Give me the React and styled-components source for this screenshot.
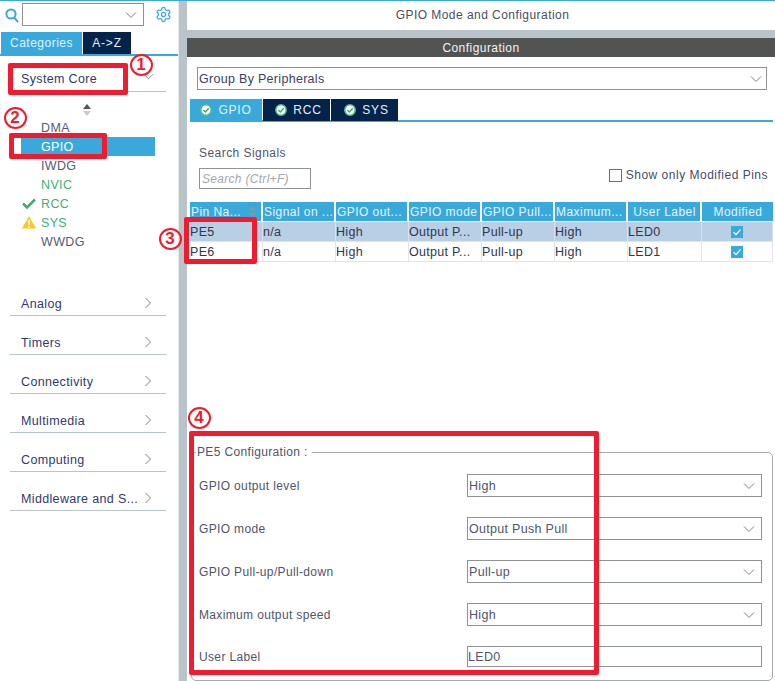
import React from "react";
import styled, { createGlobalStyle } from "styled-components";
import { Settings } from "lucide-react";

const Global = createGlobalStyle`
  html, body { margin: 0; padding: 0; background: #fff; }
  body { font-family: "Liberation Sans", Arial, sans-serif; font-size: 12px; color: #3c4060; letter-spacing: .45px; }
  * { box-sizing: border-box; }
`;

const BLUE = "#39a9dc";
const NAVY = "#03234b";
const RED = "#ee1c2e";
const GREY = "#8f9296";
const LINE = "#b9c4ca";

const Page = styled.div`
  position: relative; width: 775px; height: 681px; overflow: hidden;
  display: flex; border-top: 1px solid ${BLUE};
`;
const Side = styled.aside`width: 178px; flex: none; display: flex; flex-direction: column;`;
const Splitter = styled.div`width: 9px; flex: none; margin-top: -1px; background: ${LINE}; border-left: 1px solid #e6eaec;`;
const Main = styled.main`flex: 1; min-width: 0; display: flex; flex-direction: column;`;

const SearchRow = styled.div`height: 27px; padding: 2px 0 0 5px; display: flex; align-items: flex-start; gap: 3px;`;
const SearchGlyph = styled.svg`width: 14px; height: 15px; margin-top: 5px; flex: none;`;
const Combo = styled.div`
  width: ${p => p.$w || "100%"}; height: ${p => p.$h || 23}px; flex: none; border: 1px solid ${GREY};
  background: #fff; display: flex; align-items: center; padding: 0 ${p => p.$pr ?? 6}px 0 1px; justify-content: space-between; font-size: 12.5px; letter-spacing: .3px;
`;
const GearWrap = styled.div`width: 17px; height: 17px; margin: 3px 0 0 8px; flex: none; color: ${BLUE}; display: flex;`;

const SideTabs = styled.div`
  margin-top: 4px; height: 24px; display: flex; gap: 1px; padding-left: 1px; border-bottom: 2px solid ${BLUE};
`;
const Tab = styled.div`
  height: 22px; width: ${p => p.$w}px; background: ${p => p.$on ? BLUE : NAVY}; color: ${p => p.$on ? "#e4f3fa" : "#e8edf3"};
  display: flex; align-items: center; justify-content: center; gap: 6px; font-size: 12px; letter-spacing: ${p => p.$ls ?? .8}px; flex: none;
  padding-left: ${p => p.$nudge || 0}px;
`;
const CatRow = styled.div`
  margin: 0 12px 0 10px; height: ${p => p.$h || 39}px; padding: 0 12px ${p => p.$pb ?? 4}px 11px; border-bottom: 1px solid ${LINE};
  display: flex; align-items: flex-end; justify-content: space-between; color: #33386a; font-size: 12.5px; letter-spacing: .35px;
`;
const ChevSlot = styled.span`height: ${p => p.$h}px; display: block;`;
const Sort = styled.svg`display: block; width: 10px; height: 12px; margin: 12px 0 2px 82px;`;
const Items = styled.ul`list-style: none; margin: 0; padding: 0 23px 0 0; display: flex; flex-direction: column;`;
const Item = styled.li`
  height: 19px; display: flex; align-items: center; position: relative; padding-left: 41px;
  font-size: 12.5px; letter-spacing: .35px;
  color: ${p => p.$on ? "#fff" : p.$ok ? "#3fae78" : "#565a72"};
  background: ${p => p.$on ? `linear-gradient(90deg,#fff 21px,${BLUE} 21px)` : "transparent"};
`;
const ItemIcon = styled.svg`position: absolute; left: 22px; top: 3px; width: 14px; height: 13px;`;
const Cats = styled.div`margin-top: 26px;`;

const Title = styled.div`height: 29px; display: flex; align-items: center; justify-content: center; color: #4a4e60; font-size: 12px; padding: 0 0 1px 3px;`;
const Band = styled.div`height: 8px; background: ${LINE};`;
const DarkBar = styled.div`height: 19px; background: #525453; color: #f2f2f2; display: flex; align-items: center; justify-content: center;`;
const Content = styled.div`flex: 1; display: flex; flex-direction: column; padding: 10px 2px 0 3px;`;
const GroupWrap = styled.div`padding: 0 6px 0 7px;`;
const MainTabs = styled.div`
  margin-top: 9px; height: 23px; display: flex; gap: 1px; border-bottom: 2px solid ${BLUE}; 
`;
const TabCheck = styled.svg`width: 12px; height: 12px; flex: none;`;
const SearchLabel = styled.div`margin: 24px 0 0 9px; height: 15px; line-height: 15px; color: #50546a;`;
const FilterRow = styled.div`margin-top: 7px; padding: 0 5px 0 9px; height: 21px; display: flex; justify-content: space-between;`;
const SearchInput = styled.div`
  width: 112px; height: 21px; border: 1px solid ${GREY}; padding-left: 2px; display: flex; align-items: center;
  color: #a3a6ad; font-style: italic; font-size: 12px; letter-spacing: .3px;
`;
const CheckLabel = styled.label`display: flex; align-items: center; gap: 4px; color: #484c66; height: 14px; letter-spacing: .5px;`;
const EmptyBox = styled.span`width: 13px; height: 13px; border: 1px solid #6d6f75; display: block;`;

const Table = styled.div`margin-top: 13px; width: 583px;`;
const Row = styled.div`
  display: grid; grid-template-columns: 73px 73px 73px 73px 73px 73px 74px 71px;
  height: 20px; background: ${p => p.$sel ? "#b8cfe6" : "#fff"};
  border-bottom: ${p => p.$head ? "none" : "1px solid #e2e4e6"};
`;
const HeadCell = styled.div`
  background: ${BLUE}; color: #e6f4fb; margin-right: 2px; height: 19px; display: flex; align-items: center; position: relative;
  padding-left: 1px; white-space: nowrap; overflow: hidden; justify-content: ${p => p.$c ? "center" : "flex-start"};
  &:last-child { margin-right: 0; }
`;
const Cell = styled.div`
  display: flex; align-items: center; white-space: nowrap; color: #33364f;
  border-right: 1px solid ${p => p.$sel ? "#d8e2ee" : "#e2e4e6"};
  justify-content: ${p => p.$c ? "center" : "flex-start"}; font-size: 12.5px; letter-spacing: .3px;
`;
const Tick = styled.svg`width: 12px; height: 12px; display: block;`;
const HeadSort = styled.svg`position: absolute; right: 4px; top: 3px; width: 9px; height: 13px;`;

const Field = styled.div`
  position: relative; margin: 190px 0 0 1px; width: 582px; flex: none;
  height: 229px; border: 1px solid #a6aaac; border-radius: 5px; padding: 0 9px 0 7px; letter-spacing: .35px;
`;
const Legend = styled.div`
  position: absolute; top: -8px; left: 4px; background: #fff; padding: 0 4px 0 1px; color: #50546a; line-height: 15px; height: 15px;
`;
const Rows = styled.div`padding-top: 21px; display: flex; flex-direction: column; gap: 20px;`;
const FieldRow = styled.div`display: grid; grid-template-columns: 268px 295px; align-items: center; color: #50546a; height: ${p => p.$h || 23}px;`;
const TextBox = styled.div`height: 21px; border: 1px solid ${GREY}; display: flex; align-items: center; font-size: 12.5px; color: #50546a; letter-spacing: .3px;`;

const Mark = styled.div`
  position: absolute; left: ${p => p.$x}px; top: ${p => p.$y}px; width: ${p => p.$w}px; height: ${p => p.$h}px;
  border: 5px solid ${RED}; border-radius: 2px; pointer-events: none;
`;
const Badge = styled.div`
  position: absolute; left: ${p => p.$x - 11.5}px; top: ${p => p.$y - 11}px; width: 23px; height: 22px; border-radius: 50%;
  border: 2px solid ${RED}; color: ${RED}; font-weight: 700; font-size: 17px; letter-spacing: 0;
  display: flex; align-items: center; justify-content: center;
`;

const Chev = ({ dir = "down", size = 12, color = "#7d8084" }) => (
  <svg width={size} height={size} viewBox="0 0 12 12" fill="none" stroke={color} strokeWidth="1" style={{ display: "block" }}>
    {dir === "down" ? <path d="M1 3.5 6 8.5 11 3.5" /> : <path d="M3.5 1 8.5 6 3.5 11" />}
  </svg>
);
const CheckBadge = () => (
  <TabCheck viewBox="0 0 12 12">
    <circle cx="6" cy="6" r="5.2" fill="#fff" stroke="#5ab886" strokeWidth="1.5" />
    <path d="M3.3 6 5.3 8 8.8 4.2" fill="none" stroke="#3fa873" strokeWidth="1.5" />
  </TabCheck>
);
const BlueTick = () => (
  <Tick viewBox="0 0 12 12">
    <rect width="12" height="12" fill={BLUE} />
    <path d="M2.5 6.2 5 8.6 9.6 3.4" fill="none" stroke="#fff" strokeWidth="1.3" />
  </Tick>
);

const cols = ["Pin Na...", "Signal on ...", "GPIO out...", "GPIO mode", "GPIO Pull...", "Maximum...", "User Label", "Modified"];
const data = [
  ["PE5", "n/a", "High", "Output P...", "Pull-up", "High", "LED0"],
  ["PE6", "n/a", "High", "Output P...", "Pull-up", "High", "LED1"],
];
const fields = [["GPIO output level", "High"], ["GPIO mode", "Output Push Pull"], ["GPIO Pull-up/Pull-down", "Pull-up"], ["Maximum output speed", "High"]];
const cats = ["Analog", "Timers", "Connectivity", "Multimedia", "Computing", "Middleware and S..."];

export default function App() {
  return (
    <>
      <Global />
      <Page>
        <Side>
          <SearchRow>
            <SearchGlyph viewBox="0 0 14 15" fill="none" stroke={BLUE} strokeWidth="2">
              <circle cx="6" cy="6" r="4.6" /><path d="M9.2 9.6 13 14" />
            </SearchGlyph>
            <Combo $w="122px"><span /><Chev /></Combo>
            <GearWrap><Settings size={17} strokeWidth={1.8} /></GearWrap>
          </SearchRow>
          <SideTabs>
            <Tab $on $w={81} $ls={.5}>Categories</Tab>
            <Tab $w={48}>A-&gt;Z</Tab>
          </SideTabs>
          <CatRow $h={36} $pb={5}><span>System Core</span><ChevSlot $h={15}><Chev size={11} /></ChevSlot></CatRow>
          <Sort viewBox="0 0 10 12"><path d="M5 0 9 5H1z" fill="#555" /><path d="M5 12 1 7h8z" fill="#ccc" /></Sort>
          <Items>
            <Item>DMA</Item>
            <Item $on>GPIO</Item>
            <Item>IWDG</Item>
            <Item $ok>NVIC</Item>
            <Item $ok>
              <ItemIcon viewBox="0 0 14 13"><path d="M1 6.5 5 10.5 13 2.5" fill="none" stroke="#48a878" strokeWidth="2.6" /></ItemIcon>RCC
            </Item>
            <Item $ok>
              <ItemIcon viewBox="0 0 14 13"><path d="M7 0 14 12.5H0z" fill="#fbc81c" /><path d="M7 4v5M7 10v1.6" stroke="#fff" strokeWidth="1.4" /></ItemIcon>SYS
            </Item>
            <Item>WWDG</Item>
          </Items>
          <Cats>
            {cats.map(c => (
              <CatRow key={c}><span>{c}</span><ChevSlot $h={14}><Chev dir="right" /></ChevSlot></CatRow>
            ))}
          </Cats>
        </Side>
        <Splitter />
        <Main>
          <Title>GPIO Mode and Configuration</Title>
          <Band />
          <DarkBar>Configuration</DarkBar>
          <Content>
            <GroupWrap>
              <Combo $h={23} $pr={4}><span>Group By Peripherals</span><Chev /></Combo>
            </GroupWrap>
            <MainTabs>
              <Tab $on $w={72}><CheckBadge />GPIO</Tab>
              <Tab $w={67} $nudge={4}><CheckBadge />RCC</Tab>
              <Tab $w={67} $nudge={4}><CheckBadge />SYS</Tab>
            </MainTabs>
            <SearchLabel>Search Signals</SearchLabel>
            <FilterRow>
              <SearchInput>Search (Ctrl+F)</SearchInput>
              <CheckLabel><EmptyBox />Show only Modified Pins</CheckLabel>
            </FilterRow>
            <Table>
              <Row $head>
                {cols.map((c, i) => (
                  <HeadCell key={c} $c={i >= 6}>
                    {c}
                    {i === 0 && (
                      <HeadSort viewBox="0 0 9 13"><path d="M4.5 1 8 5.5H1z" fill="#7f99ab" /><path d="M4.5 12 1 7.5h7z" fill="#7f99ab" /></HeadSort>
                    )}
                  </HeadCell>
                ))}
              </Row>
              {data.map((r, ri) => (
                <Row key={r[0]} $sel={ri === 0}>
                  {r.map((v, i) => <Cell key={i} $sel={ri === 0}>{v}</Cell>)}
                  <Cell $c $sel={ri === 0}><BlueTick /></Cell>
                </Row>
              ))}
            </Table>
            <Field>
              <Legend>PE5 Configuration :</Legend>
              <Rows>
                {fields.map(([l, v]) => (
                  <FieldRow key={l}>
                    <span>{l}</span>
                    <Combo $h={23}><span>{v}</span><Chev /></Combo>
                  </FieldRow>
                ))}
                <FieldRow $h={21}><span>User Label</span><TextBox>LED0</TextBox></FieldRow>
              </Rows>
            </Field>
          </Content>
        </Main>
        <Mark $x={8} $y={62} $w={120} $h={32} />
        <Mark $x={9} $y={132} $w={98} $h={26} />
        <Mark $x={184} $y={216} $w={73} $h={47} />
        <Mark $x={189} $y={430} $w={410} $h={244} />
        <Badge $x={141} $y={64}>1</Badge>
        <Badge $x={15} $y={117}>2</Badge>
        <Badge $x={170} $y={238}>3</Badge>
        <Badge $x={199} $y={417}>4</Badge>
      </Page>
    </>
  );
}
